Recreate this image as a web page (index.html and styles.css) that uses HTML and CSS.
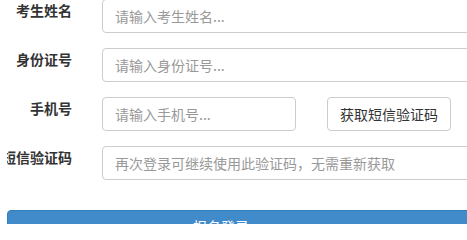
FILE: index.html
```html
<!DOCTYPE html>
<html lang="zh-CN">
<head>
<meta charset="utf-8">
<title>报名登录</title>
<link rel="stylesheet" href="styles.css">
</head>
<body>
<form class="login-form">
  <div class="form-row">
    <label class="row-label">考生姓名</label>
    <div class="row-field">
      <input class="text-input wide" type="text" placeholder="请输入考生姓名...">
    </div>
  </div>
  <div class="form-row">
    <label class="row-label">身份证号</label>
    <div class="row-field">
      <input class="text-input wide" type="text" placeholder="请输入身份证号...">
    </div>
  </div>
  <div class="form-row">
    <label class="row-label">手机号</label>
    <div class="row-field">
      <input class="text-input phone" type="text" placeholder="请输入手机号...">
      <button class="code-btn" type="button">获取短信验证码</button>
    </div>
  </div>
  <div class="form-row">
    <label class="row-label">短信验证码</label>
    <div class="row-field">
      <input class="text-input wide" type="text" placeholder="再次登录可继续使用此验证码，无需重新获取">
    </div>
  </div>
  <div class="submit-row">
    <button class="submit-btn" type="button">报名登录</button>
  </div>
</form>
</body>
</html>
```
FILE: styles.css
```css
html, body {
  margin: 0;
  padding: 0;
  height: 224px;
  overflow: hidden;
  background: #fff;
}
body {
  font-family: "Noto Sans CJK SC", "Liberation Sans", sans-serif;
  font-size: 14px;
  line-height: 20px;
  color: #333;
}
.login-form {
  margin: -1px 0 0 7px;
  width: 560px;
  height: 225px;
  overflow: hidden;
}
.form-row {
  display: flex;
  align-items: flex-start;
  margin-bottom: 15px;
}
.row-label {
  flex: 0 0 80px;
  min-width: 0;
  box-sizing: border-box;
  display: flex;
  justify-content: flex-end;
  padding: 1px 15px 0 0;
  font-weight: bold;
  white-space: nowrap;
  color: #333;
}
.row-field {
  flex: 1 1 auto;
  min-width: 0;
  display: flex;
  padding-left: 15px;
}
.text-input {
  box-sizing: border-box;
  flex: 0 0 auto;
  height: 34px;
  padding: 6px 12px;
  border: 1px solid #ccc;
  border-radius: 4px;
  font-family: inherit;
  font-size: 14px;
  line-height: 20px;
  color: #555;
  background: #fff;
  outline: none;
}
.text-input::placeholder {
  color: #999;
}
.wide {
  width: 440px;
}
.phone {
  width: 194px;
}
.code-btn {
  box-sizing: border-box;
  flex: 0 0 auto;
  margin-left: 31px;
  width: 124px;
  height: 34px;
  padding: 6px 12px;
  border: 1px solid #ccc;
  border-radius: 4px;
  background: #fff;
  color: #333;
  font-family: inherit;
  font-size: 14px;
  line-height: 20px;
  white-space: nowrap;
}
.submit-row {
  padding-top: 15px;
}
.submit-btn {
  display: block;
  box-sizing: border-box;
  width: 553px;
  padding: 5px 0 10px 185px;
  border: 1px solid #357ebd;
  border-radius: 4px;
  background: #428bca;
  color: #fff;
  font-family: inherit;
  font-size: 14px;
  line-height: 20px;
  text-align: left;
}
```
